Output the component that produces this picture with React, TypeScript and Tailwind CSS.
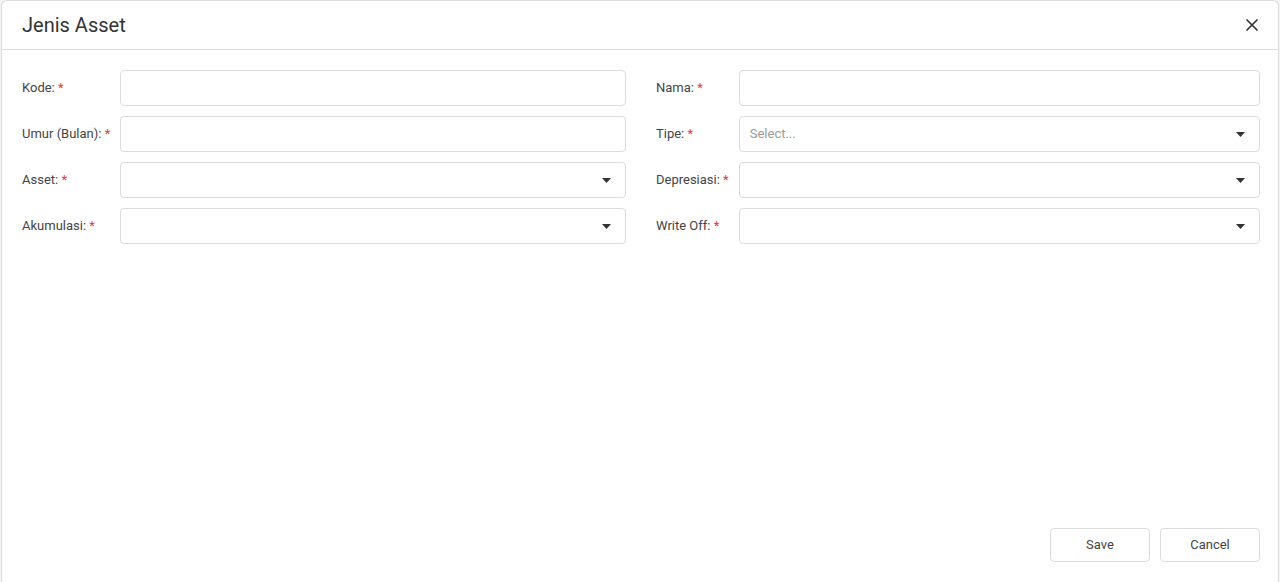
import { X } from 'lucide-react'

const left = [
  { label: 'Kode:', kind: 'text' },
  { label: 'Umur (Bulan):', kind: 'text' },
  { label: 'Asset:', kind: 'select' },
  { label: 'Akumulasi:', kind: 'select' },
]

const right = [
  { label: 'Nama:', kind: 'text' },
  { label: 'Tipe:', kind: 'select', placeholder: 'Select...' },
  { label: 'Depresiasi:', kind: 'select' },
  { label: 'Write Off:', kind: 'select' },
]

type Field = { label: string; kind: string; placeholder?: string }

function Caret() {
  return (
    <svg width="9" height="5" viewBox="0 0 9 5" className="shrink-0">
      <path d="M0 0h9L4.5 5z" fill="#333" />
    </svg>
  )
}

function FieldColumn({ fields }: { fields: Field[] }) {
  return (
    <div className="grid grid-cols-[auto_1fr] gap-x-[10px] gap-y-[10px] items-center">
      {fields.map((f) => (
        <div key={f.label} className="contents">
          <label className="text-[13px] text-[#444] whitespace-nowrap">
            {f.label} <span className="text-[#e53935]">*</span>
          </label>
          {f.kind === 'text' ? (
            <input className="h-9 w-full rounded border border-[#dcdcdc] px-[10px] text-[13px] outline-none" />
          ) : (
            <div className="h-9 w-full rounded border border-[#dcdcdc] pl-[10px] pr-[14px] flex items-center justify-between">
              <span className="text-[13px] text-[#999]">{f.placeholder ?? ''}</span>
              <Caret />
            </div>
          )}
        </div>
      ))}
    </div>
  )
}

export default function App() {
  return (
    <div className="h-[582px] bg-[#f3f3f3] pl-px pr-px font-['Roboto',sans-serif]">
      <div className="h-full bg-white border border-[#dcdcdc] border-b-0 rounded-t-md flex flex-col">
        {/* Header */}
        <div className="h-[49px] border-b border-[#dcdcdc] flex items-center justify-between pl-[20px] pr-[16px] shrink-0">
          <h2 className="text-[20px] text-[#333]">Jenis Asset</h2>
          <X size={20} strokeWidth={2} className="text-[#333]" />
        </div>

        {/* Body */}
        <div className="flex-1 pl-[20px] pr-[18px] pt-[20px]">
          <div className="grid grid-cols-2 gap-x-[30px]">
            <FieldColumn fields={left} />
            <FieldColumn fields={right} />
          </div>
        </div>

        {/* Footer */}
        <div className="flex justify-end gap-[10px] pr-[18px] pb-[20px]">
          <button className="h-[34px] w-[100px] rounded border border-[#dcdcdc] bg-white text-[13px] text-[#444]">
            Save
          </button>
          <button className="h-[34px] w-[100px] rounded border border-[#dcdcdc] bg-white text-[13px] text-[#444]">
            Cancel
          </button>
        </div>
      </div>
    </div>
  )
}
